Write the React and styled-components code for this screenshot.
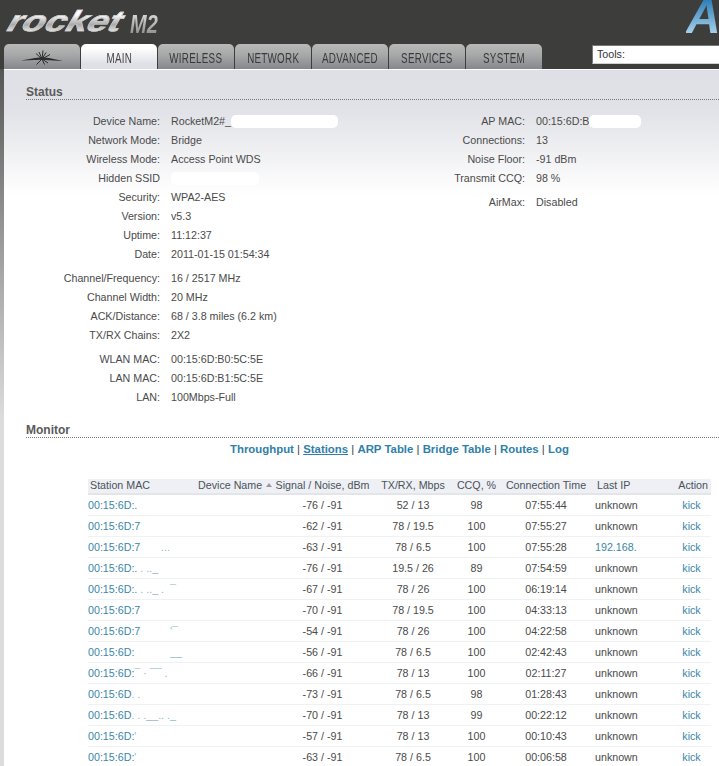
import styled, { createGlobalStyle } from "styled-components";

const TABS = ["MAIN", "WIRELESS", "NETWORK", "ADVANCED", "SERVICES", "SYSTEM"];

const LEFT_GROUPS = [
  [
    { label: "Device Name:", value: "RocketM2#_", blot: 107 },
    { label: "Network Mode:", value: "Bridge" },
    { label: "Wireless Mode:", value: "Access Point WDS" },
    { label: "Hidden SSID", value: "", blot: 88 },
    { label: "Security:", value: "WPA2-AES" },
    { label: "Version:", value: "v5.3" },
    { label: "Uptime:", value: "11:12:37" },
    { label: "Date:", value: "2011-01-15 01:54:34" },
  ],
  [
    { label: "Channel/Frequency:", value: "16 / 2517 MHz" },
    { label: "Channel Width:", value: "20 MHz" },
    { label: "ACK/Distance:", value: "68 / 3.8 miles (6.2 km)" },
    { label: "TX/RX Chains:", value: "2X2" },
  ],
  [
    { label: "WLAN MAC:", value: "00:15:6D:B0:5C:5E" },
    { label: "LAN MAC:", value: "00:15:6D:B1:5C:5E" },
    { label: "LAN:", value: "100Mbps-Full" },
  ],
];

const RIGHT_GROUPS = [
  [
    { label: "AP MAC:", value: "00:15:6D:B", blot: 52 },
    { label: "Connections:", value: "13" },
    { label: "Noise Floor:", value: "-91 dBm" },
    { label: "Transmit CCQ:", value: "98 %" },
  ],
  [{ label: "AirMax:", value: "Disabled" }],
];

const LINKS = ["Throughput", "Stations", "ARP Table", "Bridge Table", "Routes", "Log"];

const STATIONS = [
  ["00:15:6D:.", "", "-76", "52 / 13", "98", "07:55:44", "unknown"],
  ["00:15:6D:7", "", "-62", "78 / 19.5", "100", "07:55:27", "unknown"],
  ["00:15:6D:7", "       ...", "-63", "78 / 6.5", "100", "07:55:28", "192.168."],
  ["00:15:6D:.", " . .._", "-76", "19.5 / 26", "89", "07:54:59", "unknown"],
  ["00:15:6D:.", " . .._ .  ¯", "-67", "78 / 26", "100", "06:19:14", "unknown"],
  ["00:15:6D:7", "", "-70", "78 / 19.5", "100", "04:33:13", "unknown"],
  ["00:15:6D:7", "          '¯", "-54", "78 / 26", "100", "04:22:58", "unknown"],
  ["00:15:6D:", "            __", "-56", "78 / 6.5", "100", "02:42:43", "unknown"],
  ["00:15:6D:", "¯ · ¯¯ .", "-66", "78 / 13", "100", "02:11:27", "unknown"],
  ["00:15:6D", ". .", "-73", "78 / 6.5", "98", "01:28:43", "unknown"],
  ["00:15:6D", ". . .__.. ._", "-70", "78 / 13", "99", "00:22:12", "unknown"],
  ["00:15:6D:", "'", "-57", "78 / 13", "100", "00:10:43", "unknown"],
  ["00:15:6D:", "'", "-63", "78 / 6.5", "100", "00:06:58", "unknown"],
];

const GlobalStyle = createGlobalStyle`
  html, body {
    margin: 0;
    height: 766px;
    overflow: hidden;
    background: #ffffff;
  }
  body {
    font-family: "Liberation Sans", Arial, sans-serif;
    font-size: 10.7px;
    color: #4a4a4a;
  }
`;

const Page = styled.div`
  width: 719px;
  height: 766px;
  overflow: hidden;
  display: flex;
  flex-direction: column;
`;

const Header = styled.header`
  height: 69px;
  flex: none;
  background: #3d3e3c;
  display: flex;
  flex-direction: column;
`;

const BrandRow = styled.div`
  height: 44px;
  display: flex;
  justify-content: space-between;
  overflow: hidden;
`;

const RocketLogo = styled.div`
  display: flex;
  align-items: flex-start;
  padding: 6px 0 0 1px;
`;

const RocketWord = styled.span`
  display: inline-block;
  width: 129px;
  font-size: 29px;
  line-height: 30px;
  font-weight: 700;
  background: linear-gradient(#ffffff 28%, #a9a9a9 62%, #e4e4e4 85%);
  -webkit-background-clip: text;
  background-clip: text;
  color: transparent;
  -webkit-text-stroke: 0.6px #c9c9c9;
  transform: scaleX(1.3) skewX(-24deg);
  transform-origin: left bottom;
`;

const ModelWord = styled.span`
  display: inline-block;
  font-size: 25px;
  line-height: 24px;
  margin-top: 6px;
  font-style: italic;
  font-weight: 700;
  background: linear-gradient(#e0e0e0, #8a8a8a);
  -webkit-background-clip: text;
  background-clip: text;
  color: transparent;
  transform: scaleX(0.8);
  transform-origin: left center;
`;

const AirBrand = styled.div`
  width: 33px;
  overflow: hidden;
  white-space: nowrap;
  font-size: 48px;
  line-height: 34px;
  height: 34px;
  font-style: italic;
  font-weight: 700;
  background: linear-gradient(#2f7fb8, #a8d2ea);
  -webkit-background-clip: text;
  background-clip: text;
  color: transparent;
`;

const TabBar = styled.nav`
  height: 25px;
  display: flex;
  align-items: flex-end;
  gap: 1px;
  padding-left: 4px;
`;

const Tab = styled.div`
  width: 76px;
  height: 25px;
  flex: none;
  box-sizing: border-box;
  border-radius: 5px 5px 0 0;
  display: flex;
  align-items: center;
  justify-content: center;
  padding-top: 2px;
  color: ${(props) => (props.active ? "#444444" : "#37393b")};
  background: ${(props) =>
    props.active
      ? "linear-gradient(#ffffff 15%, #dfe0e6 80%)"
      : "linear-gradient(#b8b9b8, #a6a7a8 45%, #85878c)"};
`;

const TabLabel = styled.span`
  display: inline-block;
  font-size: 14px;
  line-height: 14px;
  letter-spacing: 0.4px;
  white-space: nowrap;
  transform: scaleX(0.7);
`;

const ToolsSelect = styled.select`
  appearance: none;
  width: 150px;
  height: 19px;
  flex: none;
  margin: 0 0 5px 49px;
  padding: 0 0 1px 4px;
  box-sizing: border-box;
  font-family: "Liberation Sans", Arial, sans-serif;
  font-size: 10.7px;
  color: #333333;
  background: #ffffff;
  border: 1px solid;
  border-color: #777777 #d0d0d0 #d0d0d0 #777777;
  border-radius: 0;
`;

const Body = styled.div`
  flex: 1;
  display: flex;
  min-height: 0;
`;

const SideEdge = styled.div`
  width: 4px;
  flex: none;
  background: linear-gradient(#565656 0, #9d9d9d 180px, #dcdcdc 350px);
`;

const Main = styled.main`
  flex: 1;
  min-width: 0;
  border-top: 1px solid #ffffff;
  background: linear-gradient(#dfe0e6 0, #e1e2e7 40px, #ffffff 125px);
`;

const SectionTitle = styled.h2`
  margin: ${(props) => props.$top}px 0 0 22px;
  height: 15px;
  line-height: 16px;
  font-size: 12px;
  font-weight: 700;
  color: #5a5a5a;
  border-bottom: 1px dotted #777777;
`;

const StatusColumns = styled.div`
  display: flex;
  padding-top: 12px;
`;

const Column = styled.div`
  width: ${(props) => props.$width}px;
  flex: none;
  display: flex;
  flex-direction: column;
  gap: 5px;
`;

const FieldGroup = styled.div`
  display: flex;
  flex-direction: column;
`;

const Field = styled.div`
  display: grid;
  grid-template-columns: ${(props) => props.$labelWidth}px 1fr;
  column-gap: 11px;
  height: 19px;
  line-height: 19px;
  white-space: nowrap;
`;

const FieldLabel = styled.span`
  text-align: right;
`;

const Blot = styled.span`
  display: inline-block;
  height: 13px;
  vertical-align: -3px;
  background: #ffffff;
  border-radius: 5px;
`;

const MonitorLinks = styled.div`
  margin-top: 3px;
  height: 16px;
  line-height: 16px;
  padding-left: 226px;
  font-size: 11.4px;
  color: #444444;
  white-space: nowrap;
`;

const MonitorLink = styled.a`
  font-weight: 700;
  color: #2f7fa9;
  text-decoration: ${(props) => (props.$current ? "underline" : "none")};
`;

const StationTable = styled.table`
  margin: 22px 0 0 84px;
  width: 623px;
  table-layout: fixed;
  border-collapse: collapse;
`;

const HeadRow = styled.tr`
  height: 14px;
  background: #eef0f5;
  border-bottom: 2px solid #e3e5e8;
`;

const HeadCell = styled.th`
  padding: 0 ${(props) => (props.$align === "right" ? "3px" : "0")} 1px
    ${(props) => props.$pad || 0}px;
  font-weight: 400;
  font-size: 10.7px;
  line-height: 13px;
  color: #4a5258;
  white-space: nowrap;
  text-align: ${(props) => props.$align || "center"};
`;

const SortArrow = styled.span`
  display: inline-block;
  width: 0;
  height: 0;
  margin: 0 0 2px 4px;
  border-left: 3px solid transparent;
  border-right: 3px solid transparent;
  border-bottom: 4px solid #9a9a9a;
`;

const StationRow = styled.tr`
  height: 21px;
  border-bottom: 1px solid #f0f1f3;
`;

const Cell = styled.td`
  padding: 0;
  line-height: 14px;
  white-space: nowrap;
  overflow: hidden;
  text-align: ${(props) => props.$align || "center"};
`;

const BlueText = styled.span`
  color: #3b86a8;
`;

const Scrap = styled.span`
  color: #8fb6c8;
  white-space: pre;
`;

const DishIcon = () => (
  <svg width="42" height="15" viewBox="0 0 42 15" aria-hidden="true">
    <path
      d="M0 10.5 L14 8 L21 7.2 L28 8 L42 11 L28 10.2 L21 9.8 L14 10 Z"
      fill="#2b2c2c"
    />
    <path
      d="M21 9 L15 3.5 M21 9 L18 2 M21 9 L22 0.5 M21 9 L25 2.5 M21 9 L29 4.5 M21 9 L15.5 14.5 M21 9 L23.5 14.5 M21 9 L27 13"
      stroke="#2b2c2c"
      strokeWidth="1"
      fill="none"
    />
  </svg>
);

const renderGroups = (groups, labelWidth) =>
  groups.map((group) => (
    <FieldGroup key={group[0].label}>
      {group.map((field) => (
        <Field key={field.label} $labelWidth={labelWidth}>
          <FieldLabel>{field.label}</FieldLabel>
          <span>
            {field.value}
            {field.blot && <Blot style={{ width: field.blot }} />}
          </span>
        </Field>
      ))}
    </FieldGroup>
  ));

const App = () => {
  return (
    <Page>
      <GlobalStyle />
      <Header>
        <BrandRow>
          <RocketLogo>
            <RocketWord>rocket</RocketWord>
            <ModelWord>M2</ModelWord>
          </RocketLogo>
          <AirBrand>AI</AirBrand>
        </BrandRow>
        <TabBar>
          <Tab>
            <DishIcon />
          </Tab>
          {TABS.map((tab) => (
            <Tab key={tab} active={tab === "MAIN" ? 1 : 0}>
              <TabLabel>{tab}</TabLabel>
            </Tab>
          ))}
          <ToolsSelect defaultValue="tools">
            <option value="tools">Tools:</option>
          </ToolsSelect>
        </TabBar>
      </Header>
      <Body>
        <SideEdge />
        <Main>
          <SectionTitle $top={14}>Status</SectionTitle>
          <StatusColumns>
            <Column $width={361}>{renderGroups(LEFT_GROUPS, 156)}</Column>
            <Column $width={354}>{renderGroups(RIGHT_GROUPS, 160)}</Column>
          </StatusColumns>
          <SectionTitle $top={15}>Monitor</SectionTitle>
          <MonitorLinks>
            {LINKS.map((link, index) => (
              <span key={link}>
                {index > 0 && " | "}
                <MonitorLink $current={link === "Stations"}>{link}</MonitorLink>
              </span>
            ))}
          </MonitorLinks>
          <StationTable>
            <colgroup>
              <col style={{ width: 107 }} />
              <col style={{ width: 80 }} />
              <col style={{ width: 95 }} />
              <col style={{ width: 86 }} />
              <col style={{ width: 41 }} />
              <col style={{ width: 98 }} />
              <col style={{ width: 77 }} />
              <col style={{ width: 39 }} />
            </colgroup>
            <thead>
              <HeadRow>
                <HeadCell $align="left" $pad={2}>Station MAC</HeadCell>
                <HeadCell $align="left" $pad={3}>
                  Device Name
                  <SortArrow />
                </HeadCell>
                <HeadCell>Signal / Noise, dBm</HeadCell>
                <HeadCell>TX/RX, Mbps</HeadCell>
                <HeadCell>CCQ, %</HeadCell>
                <HeadCell>Connection Time</HeadCell>
                <HeadCell $align="left" $pad={2}>Last IP</HeadCell>
                <HeadCell $align="right">Action</HeadCell>
              </HeadRow>
            </thead>
            <tbody>
              {STATIONS.map((station, index) => (
                <StationRow key={index}>
                  <Cell $align="left">
                    <BlueText>{station[0]}</BlueText>
                    <Scrap>{station[1]}</Scrap>
                  </Cell>
                  <Cell />
                  <Cell>{station[2]} / -91</Cell>
                  <Cell>{station[3]}</Cell>
                  <Cell>{station[4]}</Cell>
                  <Cell>{station[5]}</Cell>
                  <Cell $align="left">
                    {station[6] === "unknown" ? station[6] : <BlueText>{station[6]}</BlueText>}
                  </Cell>
                  <Cell>
                    <BlueText>kick</BlueText>
                  </Cell>
                </StationRow>
              ))}
            </tbody>
          </StationTable>
        </Main>
      </Body>
    </Page>
  );
};

export default App;
